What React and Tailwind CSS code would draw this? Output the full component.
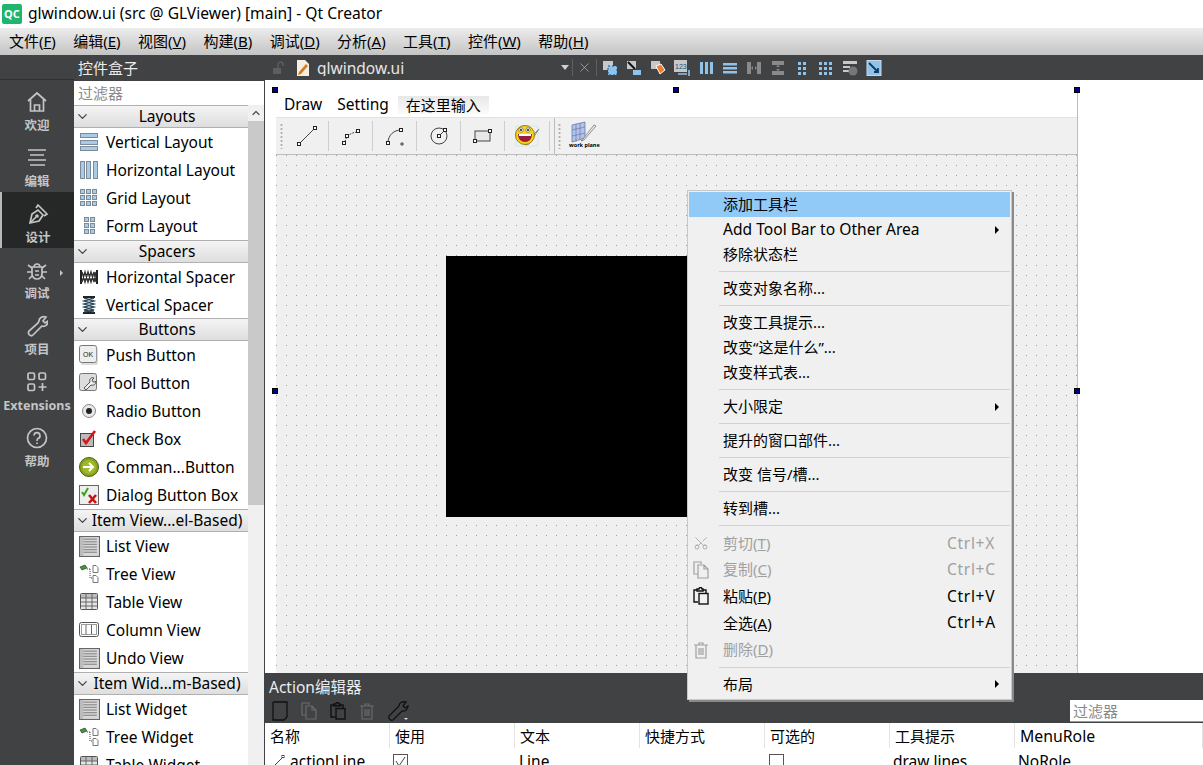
import { ChevronDown, ChevronUp, Scissors, X } from 'lucide-react'

const font = "font-['Noto_Sans','Noto_Sans_CJK_SC',sans-serif]"

/* ---------- widget box icons ---------- */
const Svg = ({ children, size = 20, className = '' }) => (
  <svg width={size} height={size} viewBox="0 0 20 20" fill="none" className={className}>
    {children}
  </svg>
)

const Cell = ({ x, y, w, h }) => (
  <rect x={x + 0.5} y={y + 0.5} width={w} height={h} fill="#a8cbe8" stroke="#7d8b99" />
)

const VLayout = () => (
  <Svg>
    <Cell x={1} y={1} w={17} h={4} />
    <Cell x={1} y={8} w={17} h={4} />
    <Cell x={1} y={14} w={17} h={4} />
  </Svg>
)
const HLayout = () => (
  <Svg>
    <Cell x={1} y={1} w={4} h={17} />
    <Cell x={7} y={1} w={4} h={17} />
    <Cell x={14} y={1} w={4} h={17} />
  </Svg>
)
const GridLayout = () => (
  <Svg>
    {[1, 7, 13].map((y) => [1, 7, 13].map((x) => <Cell key={`${x}-${y}`} x={x} y={y} w={4} h={4} />))}
  </Svg>
)
const FormLayout = () => (
  <Svg>
    {[1, 7, 13].map((y) => [5, 11].map((x) => <Cell key={`${x}-${y}`} x={x} y={y} w={4} h={4} />))}
  </Svg>
)
const HSpacer = () => (
  <Svg>
    <path d="M1 3h2v14H1zM17 3h2v14h-2z" fill="#222" />
    <path d="M3 5l3 10 3-10 3 10 3-10 2 10M3 15l3-10 3 10 3-10 3 10 2-10" stroke="#333" strokeWidth="1.4" />
  </Svg>
)
const VSpacer = () => (
  <Svg>
    <path d="M4 1h12v2H4zM4 17h12v2H4z" fill="#222" />
    <path d="M5 3l10 3-10 3 10 3-10 3 10 2M15 3L5 6l10 3-10 3 10 3-10 2" stroke="#2c4a5a" strokeWidth="1.4" />
  </Svg>
)
const PushBtn = () => (
  <Svg>
    <rect x="0.5" y="0.5" width="17" height="17" rx="2" fill="#eee" stroke="#777" />
    <path d="M2 19h16V3" stroke="#bbb" />
    <text x="9" y="12" textAnchor="middle" fontSize="7" fill="#222" fontFamily="Liberation Sans">OK</text>
  </Svg>
)
const ToolBtn = () => (
  <Svg>
    <rect x="0.5" y="0.5" width="17" height="17" rx="2" fill="#ddd" stroke="#777" />
    <path d="M5 15l6-6c-1-3 1-5 4-4l-2 2 1 2 2 0 1-1c0 3-2 5-5 4l-5 5z" fill="#eee" stroke="#555" />
  </Svg>
)
const RadioBtn = () => (
  <Svg>
    <circle cx="10" cy="10" r="6.5" fill="#e8e8e8" stroke="#888" />
    <circle cx="10" cy="10" r="3" fill="#222" />
  </Svg>
)
const CheckBtn = () => (
  <Svg>
    <rect x="1.5" y="4.5" width="13" height="13" fill="#bbb" stroke="#444" />
    <path d="M4 10l3 4 9-12" stroke="#d8141c" strokeWidth="2.6" />
  </Svg>
)
const CommandBtn = () => (
  <Svg>
    <circle cx="10" cy="10" r="9.5" fill="#8ba41e" stroke="#4d5c10" />
    <circle cx="10" cy="10" r="7" fill="#9dba2a" />
    <path d="M4 10h10M10 6l4 4-4 4" stroke="#fff" strokeWidth="2" />
  </Svg>
)
const DialogBtn = () => (
  <Svg>
    <rect x="0.5" y="0.5" width="19" height="19" fill="#eee" stroke="#666" />
    <path d="M3 7l2 3 4-7" stroke="#3ea21c" strokeWidth="2" />
    <path d="M10 10l7 8M17 10l-7 8" stroke="#c81414" strokeWidth="2.6" />
  </Svg>
)
const ListV = () => (
  <Svg size={21} className="shrink-0">
    <rect x="0.5" y="0.5" width="19" height="19" fill="#d8d8d8" stroke="#666" />
    {[3, 5.5, 8, 10.5, 13, 15.5].map((y) => (
      <path key={y} d={`M4 ${y}h13`} stroke="#909090" strokeWidth="1.2" />
    ))}
    <path d="M1 1h3v18H1z" fill="#bbb" />
  </Svg>
)
const TreeV = () => (
  <Svg>
    <path d="M1 3l5-2 2 3-5 2z" fill="#3d9c3a" stroke="#222" strokeWidth="0.6" />
    <path d="M8 5h3M11 5v9h2" stroke="#444" strokeDasharray="1 1" />
    <path d="M14 1.5h3l2 2v5h-5zM14 11.5h3l2 2v5h-5z" fill="#fff" stroke="#777" />
  </Svg>
)
const TableV = () => (
  <Svg>
    <rect x="1.5" y="1.5" width="17" height="16" rx="1" fill="#e5e5e5" stroke="#555" />
    <path d="M2 6h16V2H2z" fill="#bdbdbd" />
    <path d="M2 6h16M2 10h16M2 14h16M7 2v15M13 2v15" stroke="#666" />
  </Svg>
)
const ColumnV = () => (
  <Svg>
    <rect x="0.5" y="2.5" width="19" height="14" rx="2" fill="#fff" stroke="#555" />
    <path d="M7 5v10M12.5 5v10" stroke="#666" />
    <rect x="2.5" y="4.5" width="15" height="10" stroke="#999" />
  </Svg>
)

/* ---------- mode bar icons ---------- */
const Mode = ({ children }) => (
  <svg width="22" height="22" viewBox="0 0 22 22" fill="none" stroke="#c4c5c6" strokeWidth="1.7">
    {children}
  </svg>
)

const modes = [
  { label: '欢迎', icon: <path d="M2 10l9-8 9 8M4.5 8.5V20h13V8.5M8.5 20v-6h5v6" /> },
  { label: '编辑', icon: <path d="M2 3h18M4 8h14M2 13h18M4 18h15" /> },
  { label: '设计', active: true, icon: <><path d="M3 20l2-9 6-4 5 5-4 6z" /><path d="M9 5l2-3 9 9-3 2M4 19l5-5" /><circle cx="10" cy="13" r="1" /></> },
  { label: '调试', arrow: true, icon: <><path d="M6 8h10v7a5 5 0 0 1-10 0zM8 8a3 3 0 0 1 6 0M2 6l4 3M20 6l-4 3M1 13h5M21 13h-5M3 20l3-3M19 20l-3-3M9 12h4M9 16h4" /></> },
  { label: '项目', icon: <path d="M13 6c0-3 3-5 7-4l-3 4 2 2 3-2c0 4-3 6-6 5l-9 9c-2 2-6-1-4-4l9-8z" /> },
  { label: 'Extensions', icon: <><rect x="2" y="2" width="6.5" height="6.5" rx="1.5" /><rect x="13" y="2" width="6.5" height="6.5" rx="1.5" /><rect x="2" y="13" width="6.5" height="6.5" rx="1.5" /><path d="M16.5 12v8M12.5 16h8" /></> },
  { label: '帮助', icon: <><circle cx="11" cy="11" r="9.5" /><path d="M8 8.500a3 3 0 1 1 4 3c-1 .5-1 1-1 2.500M11 15.500v1.500" /></> },
]

/* ---------- data ---------- */
const sections = [
  { title: 'Layouts', items: [['Vertical Layout', <VLayout />], ['Horizontal Layout', <HLayout />], ['Grid Layout', <GridLayout />], ['Form Layout', <FormLayout />]] },
  { title: 'Spacers', items: [['Horizontal Spacer', <HSpacer />], ['Vertical Spacer', <VSpacer />]] },
  { title: 'Buttons', tight: true, items: [['Push Button', <PushBtn />], ['Tool Button', <ToolBtn />], ['Radio Button', <RadioBtn />], ['Check Box', <CheckBtn />], ['Comman...Button', <CommandBtn />], ['Dialog Button Box', <DialogBtn />]] },
  { title: 'Item View...el-Based)', items: [['List View', <ListV />], ['Tree View', <TreeV />], ['Table View', <TableV />], ['Column View', <ColumnV />], ['Undo View', <ListV />]] },
  { title: 'Item Wid...m-Based)', items: [['List Widget', <ListV />], ['Tree Widget', <TreeV />], ['Table Widget', <TableV />]] },
]

const menus = [
  ['文件', 'F'], ['编辑', 'E'], ['视图', 'V'], ['构建', 'B'], ['调试', 'D'],
  ['分析', 'A'], ['工具', 'T'], ['控件', 'W'], ['帮助', 'H'],
]

const columns = ['名称', '使用', '文本', '快捷方式', '可选的', '工具提示', 'MenuRole']

/* ---------- shared small icons ---------- */
const CopyIcon = ({ color }) => (
  <svg width="18" height="18" viewBox="0 0 18 18" fill="none" stroke={color} strokeWidth="1.2">
    <path d="M9 3V1H2v12h4" />
    <path d="M6 4h6l4 4v9H6zM12 4v4h4" />
  </svg>
)
const PasteIcon = ({ color }) => (
  <svg width="18" height="18" viewBox="0 0 18 18" fill="none" stroke={color} strokeWidth="1.4">
    <path d="M6 15H2V3h3M11 3h3v3" />
    <path d="M5 4V2h2a1.500 1.500 0 0 1 3 0h1v2z" />
    <rect x="7" y="6.500" width="9" height="10.500" />
  </svg>
)
const TrashIcon = ({ color }) => (
  <svg width="18" height="18" viewBox="0 0 18 18" fill="none" stroke={color} strokeWidth="1.2">
    <path d="M2 4h14M7 4V2h4v2M4 4v13h10V4M7 7v7M9 7v7M11 7v7" />
  </svg>
)

const Arrow = () => (
  <span className="w-0 h-0 border-y-[4px] border-y-transparent border-l-[4px] border-l-black" />
)

/* ---------- context menu ---------- */
const Sep = () => <div className="h-px bg-[#d2d2d2] ml-[30px] my-1" />

function MenuRow({ label, shortcut, arrow, icon, disabled, active, tall }) {
  return (
    <div
      className={`flex items-center ${tall ? 'h-[26.6px]' : 'h-[25px]'} ${active ? 'bg-[#91c9f7]' : ''} ${disabled ? 'text-[#a0a0a0]' : 'text-black'}`}
    >
      <span className="w-[24px] flex justify-center shrink-0">{icon}</span>
      <span className="ml-[10px] flex-1 whitespace-pre">{label}</span>
      {shortcut && <span className="w-[63px] text-[15.5px] tracking-[0.7px]">{shortcut}</span>}
      {arrow && <span className="mr-[11px] flex"><Arrow /></span>}
    </div>
  )
}

const Mn = ({ t, k }) => (
  <>
    {t}(<u>{k}</u>)
  </>
)

function ContextMenu() {
  return (
    <div className="absolute left-[687px] top-[190px] w-[325px] h-[510px] p-[1px] bg-[#f0f0f0] border border-[#c8c8c8] shadow-[2px_2px_0_#8a8a8a] text-[15px] leading-none">
      <MenuRow label="添加工具栏" active />
      <MenuRow label={<span className="text-[15.6px]">Add Tool Bar to Other Area</span>} arrow />
      <MenuRow label="移除状态栏" />
      <Sep />
      <MenuRow label="改变对象名称..." />
      <Sep />
      <MenuRow label="改变工具提示..." />
      <MenuRow label="改变“这是什么”..." />
      <MenuRow label="改变样式表..." />
      <Sep />
      <MenuRow label="大小限定" arrow />
      <Sep />
      <MenuRow label="提升的窗口部件..." />
      <Sep />
      <MenuRow label="改变 信号/槽..." />
      <Sep />
      <MenuRow label="转到槽..." />
      <Sep />
      <MenuRow tall disabled label={<Mn t="剪切" k="T" />} shortcut="Ctrl+X" icon={<Scissors size={16} strokeWidth={1.2} className="-rotate-90" />} />
      <MenuRow tall disabled label={<Mn t="复制" k="C" />} shortcut="Ctrl+C" icon={<CopyIcon color="#a0a0a0" />} />
      <MenuRow tall label={<Mn t="粘贴" k="P" />} shortcut="Ctrl+V" icon={<PasteIcon color="#111" />} />
      <MenuRow tall label={<Mn t="全选" k="A" />} shortcut="Ctrl+A" />
      <MenuRow tall disabled label={<Mn t="删除" k="D" />} icon={<TrashIcon color="#a0a0a0" />} />
      <Sep />
      <MenuRow label="布局" arrow />
    </div>
  )
}

/* ---------- designer toolbar on the dark tab bar ---------- */
const Bar = ({ children }) => (
  <svg width="16" height="16" viewBox="0 0 16 16" fill="none" className="shrink-0">
    {children}
  </svg>
)
const blue = '#8fc3ea'
const grey = '#c8c8c8'
const designerTools = [
  <><rect x="1" y="1" width="10" height="9" fill={grey} /><rect x="6" y="6" width="9" height="9" fill={blue} stroke="#1d4f80" strokeDasharray="2 2" /></>,
  <><rect x="1" y="1" width="9" height="8" fill={grey} /><path d="M2 2l7 7" stroke="#111" strokeWidth="2" /><rect x="7" y="10" width="8" height="5" fill={blue} /></>,
  <><rect x="1" y="1" width="9" height="8" fill={grey} /><path d="M6 6l5-2 4 6-5 4z" fill="#f08030" stroke="#fff" /></>,
  <><rect x="0" y="0" width="13" height="12" fill={grey} /><text x="1" y="9" fontSize="7" fill="#1d4f80" fontFamily="Liberation Sans">123</text><path d="M4 14h9M15 10v6" stroke={blue} strokeWidth="1.600" /></>,
  <path d="M2 2h3v12H2zM7 2h3v12H7zM12 2h3v12h-3z" fill={blue} />,
  <path d="M1 3h14v2.500H1zM1 7h14v2.500H1zM1 11h14v2.500H1z" fill={blue} />,
  <path d="M1 2h4v12H1zM11 2h4v12h-4zM5 8l2-2v4zM11 8L9 6v4z" fill="#8a8a8a" />,
  <path d="M2 1h12v4H2zM2 11h12v4H2zM8 5l-2 2h4zM8 11l-2-2h4z" fill="#8a8a8a" />,
  <path d="M4 2h3v3H4zM9 2h3v3H9zM4 7h3v3H4zM9 7h3v3H9zM4 12h3v3H4zM9 12h3v3H9z" fill={blue} />,
  <path d="M1 2h3v3H1zM6 2h3v3H6zM11 2h3v3h-3zM1 7h3v3H1zM6 7h3v3H6zM11 7h3v3h-3zM1 12h3v3H1zM6 12h3v3H6zM11 12h3v3h-3z" fill={blue} />,
  <><path d="M1 1h14v3H1zM1 6h7v2H1zM1 10h7v2H1z" fill={grey} /><circle cx="11" cy="11" r="4.500" fill="#777" /></>,
  <><rect x="1" y="0.500" width="14" height="15" fill={blue} stroke="#c8d8e8" /><path d="M3 3l9 9M12 8v4H8" stroke="#0d3c66" strokeWidth="1.800" /></>,
]

function TabBar() {
  return (
    <div className="h-[25px] bg-[#404244] flex items-center shrink-0">
      <svg width="14" height="14" viewBox="0 0 14 14" className="ml-[7px] shrink-0">
        <path d="M1 7h8v6H1z" fill="#5c5e60" />
        <path d="M6 7V3.500a2.500 2.500 0 0 1 5 0V5" stroke="#5c5e60" strokeWidth="1.500" fill="none" />
      </svg>
      <svg width="14" height="16" viewBox="0 0 14 16" className="ml-[10px] shrink-0">
        <path d="M1 0h8l4 4v12H1z" fill="#f4efe2" />
        <path d="M3 12L10 4l2 2-7 8-3 1z" fill="#d87a1e" />
      </svg>
      <span className="ml-[7px] h-[16px] overflow-hidden text-[15.5px] leading-[17px] text-[#e6e6e6] w-[244px]">glwindow.ui</span>
      <span className="w-0 h-0 border-x-[4.500px] border-x-transparent border-t-[5px] border-t-[#d0d0d0]" />
      <span className="ml-[3px] w-px h-[17px] bg-[#5c5e60]" />
      <X size={15} strokeWidth={1} className="ml-[4px] text-[#c4c4c4]" />
      <span className="ml-[4px] w-px h-[17px] bg-[#5c5e60]" />
      <div className="ml-[5px] flex gap-[8px] items-center">
        {designerTools.map((t, i) => (
          <Bar key={i}>{t}</Bar>
        ))}
      </div>
    </div>
  )
}

/* ---------- the form being edited ---------- */
const Handle = ({ className }) => (
  <span className={`absolute w-[6px] h-[6px] bg-[#000080] border border-black ${className}`} />
)

const Tool = ({ children }) => (
  <svg width="22" height="22" viewBox="0 0 22 22" fill="none" stroke="#444" strokeWidth="1">
    {children}
  </svg>
)
const Pt = ({ x, y }) => <rect x={x - 1.5} y={y - 1.5} width="3" height="3" fill="#fff" stroke="#222" />

const Grip = () => (
  <span className="block w-[3px] h-[26px] shrink-0 bg-[radial-gradient(circle,#b0b0b0_1px,transparent_1.200px)] bg-[length:3px_4px]" />
)

const formTools = [
  <><path d="M4 18L18 4" /><Pt x={3} y={19} /><Pt x={19} y={3} /></>,
  <><path d="M5 17c1-6 5-9 12-10" strokeDasharray="2 1" /><Pt x={4} y={18} /><Pt x={7} y={11} /><Pt x={18} y={6} /></>,
  <><path d="M4 18c0-8 6-13 13-13" /><Pt x={4} y={18} /><Pt x={17} y={5} /><path d="M16 19h4M18 17v4" /></>,
  <><circle cx="11" cy="11" r="8" /><path d="M11 11l6-6" /><Pt x={11} y={11} /><Pt x={17} y={5} /></>,
  <><rect x="3" y="6" width="15" height="10" fill="#e8e8e8" /><Pt x={3} y={16} /><Pt x={18} y={6} /></>,
]

function FormToolbar() {
  return (
    <div className="h-[38px] bg-[#f0f0f0] border-y border-t-[#e2e2e2] border-b-[#bdbdbd] flex items-center shrink-0">
      <span className="ml-[4px]"><Grip /></span>
      <div className="ml-[2px] flex">
        {formTools.map((t, i) => (
          <div key={i} className="w-[44px] h-[30px] border-r border-[#cfcfcf] flex items-center justify-center">
            <Tool>{t}</Tool>
          </div>
        ))}
        <div className="w-[45px] h-[30px] border-r border-[#cfcfcf] flex items-center justify-center">
          <svg width="28" height="26" viewBox="0 0 28 26" fill="none">
            <rect x="3" y="3" width="22" height="20" stroke="#a8e4e4" strokeWidth="0.500" />
            <path d="M21 11l5-5-10 15-3 1 1-3" stroke="#888" />
            <circle cx="12" cy="12" r="9.500" fill="#f6d518" stroke="#9a7a10" />
            <path d="M5 11h14c0 5-3 8-7 8s-7-3-7-8z" fill="#9c1c3c" />
            <path d="M6 11h12v2H6z" fill="#fff" />
            <circle cx="8" cy="7" r="2.200" fill="#fff" stroke="#333" strokeWidth="0.500" />
            <circle cx="15" cy="7" r="2.200" fill="#fff" stroke="#333" strokeWidth="0.500" />
            <circle cx="8" cy="7" r="0.900" fill="#000" />
            <circle cx="15" cy="7" r="0.900" fill="#000" />
          </svg>
        </div>
      </div>
      <span className="ml-[4px] w-px h-[36px] bg-[#bdbdbd]" />
      <span className="ml-[3px]"><Grip /></span>
      <div className="relative ml-[8px] w-[28px] h-[30px]">
        <svg width="28" height="24" viewBox="0 0 28 24" fill="none">
          <path d="M3 4l13-3v16L3 21z" fill="#a8c8ea" stroke="#7a60a0" strokeWidth="0.700" />
          <path d="M7 3v18M11 2v17M3 9l13-3M3 15l13-3" stroke="#7a60a0" strokeWidth="0.600" />
          <path d="M14 18l11-14 2 1-12 14-3 1z" fill="#eee" stroke="#666" strokeWidth="0.700" />
        </svg>
        <span className="absolute left-0 top-[22px] text-[5.500px] leading-none font-bold whitespace-nowrap text-black">work plane</span>
      </div>
    </div>
  )
}

function FormArea() {
  return (
    <div className="relative flex-1 min-h-0 bg-white pl-[11px] pr-[125px] pt-[12px]">
      <Handle className="left-[7px] top-[7px]" />
      <Handle className="left-[408px] top-[7px]" />
      <Handle className="left-[809px] top-[7px]" />
      <Handle className="left-[7px] top-[308px]" />
      <Handle className="left-[809px] top-[308px]" />
      <div className="h-full flex flex-col border-r border-[#bdbdbd]">
        <div className="h-[25px] flex items-center shrink-0 text-[15.5px] pl-[8px] gap-[15px] text-black">
          <span>Draw</span>
          <span>Setting</span>
          <span className="ml-[-6px] h-[18px] leading-[18px] px-[8px] bg-gradient-to-b from-[#e8e8e8] to-[#fafafa] text-[15px]">在这里输入</span>
        </div>
        <FormToolbar />
        <div className="flex-1 min-h-0 bg-[#f0f0f0] bg-[radial-gradient(circle_at_0.500px_0.500px,#9c9c9c_0.700px,transparent_0.900px)] bg-[length:10px_10px] pl-[170px] pt-[101px]">
          <div className="w-[261px] h-[261px] bg-black" />
        </div>
      </div>
    </div>
  )
}

/* ---------- bottom action editor ---------- */
function ActionEditor() {
  return (
    <div className="h-[50px] bg-[#404244] shrink-0 relative">
      <div className="pl-[4px] pt-[3px] h-[27px] text-[15.5px] leading-[22px] text-[#ececec]">Action编辑器</div>
      <div className="flex items-center pl-[6px] gap-[11px] h-[22px]">
        <svg width="18" height="20" viewBox="0 0 18 20" fill="none" stroke="#111" strokeWidth="1.300">
          <path d="M2 2c0-1 1-1 1-1h13v15l-3 3H2z" />
        </svg>
        <CopyIcon color="#6a6a6a" />
        <PasteIcon color="#111" />
        <TrashIcon color="#6a6a6a" />
        <svg width="22" height="22" viewBox="0 0 22 22" fill="none" stroke="#111" strokeWidth="1.300">
          <path d="M12 6c0-3 3-5 7-4l-3 4 2 2 3-2c0 3-3 6-6 5l-9 9c-2 1-5-1-4-4l10-10z" />
          <path d="M17 18h4l-2 2z" fill="#ddd" stroke="none" />
        </svg>
      </div>
      <div className="absolute right-0 bottom-[1px] w-[133px] h-[22px] bg-white border-b border-[#999] pl-[3px] text-[15px] leading-[22px] text-[#8a8a8a]">过滤器</div>
    </div>
  )
}

const Check = ({ checked }) => (
  <span className="block w-[15px] h-[15px] border border-[#555] bg-white">
    {checked && (
      <svg width="13" height="13" viewBox="0 0 13 13" fill="none" stroke="#444">
        <path d="M2 6l3 5 6-9" />
      </svg>
    )}
  </span>
)

function ActionTable() {
  return (
    <div className="h-[42px] shrink-0 bg-white overflow-hidden text-[15.5px]">
      <div className="h-[28px] grid grid-cols-[125px_125px_125px_125px_125px_125px_1fr]">
        {columns.map((c) => (
          <div key={c} className="flex items-center h-[27px] pl-[5px] text-[15px] last:text-[15.8px]">
            <span className="flex-1">{c}</span>
            <span className="w-px h-[25px] self-start bg-[#e4e4e4]" />
          </div>
        ))}
      </div>
      <div className="h-[28px] grid grid-cols-[125px_125px_125px_125px_125px_125px_1fr] items-start">
        <div className="flex items-center pl-[7px] gap-[5px] leading-[20px]">
          <svg width="13" height="13" viewBox="0 0 13 13" fill="none" stroke="#444">
            <path d="M1 12L11 2" />
            <rect x="10" y="0.500" width="2" height="2" />
          </svg>
          actionLine
        </div>
        <div className="pl-[3px] pt-[3px]"><Check checked /></div>
        <div className="pl-[4px] leading-[20px]">Line</div>
        <div />
        <div className="pl-[4px] pt-[3px]"><Check /></div>
        <div className="pl-[3px] leading-[20px]">draw lines</div>
        <div className="pl-[3px] leading-[20px]">NoRole</div>
      </div>
    </div>
  )
}

/* ---------- left side ---------- */
function ModeBar() {
  return (
    <div className="w-[74px] bg-[#404244] shrink-0 flex flex-col">
      <div className="h-[25px] border-b border-[#2e2f30] shrink-0" />
      {modes.map((m) => (
        <div
          key={m.label}
          className={`relative h-[56px] pt-[11px] flex flex-col items-center gap-[4px] ${m.active ? 'bg-[#262828] border-l-2 border-[#b8b8b8]' : ''}`}
        >
          <Mode>{m.icon}</Mode>
          <span className="text-[12.500px] leading-[18px] font-bold text-[#c4c5c6] whitespace-nowrap">{m.label}</span>
          {m.arrow && (
            <span className="absolute left-[60px] top-[22px] w-0 h-0 border-y-[3px] border-y-transparent border-l-[3px] border-l-[#c4c5c6]" />
          )}
        </div>
      ))}
    </div>
  )
}

function WidgetSection({ title, items, tight }) {
  return (
    <>
      <div className={`h-[23px] flex items-center bg-gradient-to-b from-[#f4f4f4] to-[#dedede] border-y border-y-[#b0b0b0] shrink-0 ${tight ? '-mt-[1px]' : ''}`}>
        <ChevronDown size={15} strokeWidth={2} className="ml-[1px] text-[#444] shrink-0" />
        <span className="flex-1 text-center whitespace-nowrap text-[15.5px] pr-[4px]">{title}</span>
      </div>
      {items.map(([label, icon]) => (
        <div key={label} className="h-[28px] flex items-center shrink-0">
          <span className="w-[32px] pl-[5px] shrink-0 flex">{icon}</span>
          <span className="pt-[1px] text-[15.5px] whitespace-nowrap">{label}</span>
        </div>
      ))}
    </>
  )
}

function WidgetBox() {
  return (
    <div className="w-[191px] shrink-0 flex flex-col bg-white border-r border-[#404244] overflow-hidden">
      <div className="h-[26px] bg-[#404244] text-[#ececec] text-[15px] leading-[26px] pl-[4px] shrink-0">控件盒子</div>
      <div className="h-[24px] text-[15px] leading-[24px] pl-[4px] text-[#8a8a8a] shrink-0">过滤器</div>
      <div className="flex flex-1 min-h-0">
        <div className="w-[174px] flex flex-col shrink-0 text-black">
          {sections.map((s) => (
            <WidgetSection key={s.title} title={s.title} items={s.items} tight={s.tight} />
          ))}
        </div>
        <div className="flex-1 bg-[#f0f0f0] flex flex-col">
          <div className="h-[16px] flex items-center justify-center">
            <ChevronUp size={12} strokeWidth={2.500} className="text-[#555]" />
          </div>
          <div className="h-[384px] bg-[#c9c9c9]" />
        </div>
      </div>
    </div>
  )
}

export default function App() {
  return (
    <div className={`relative w-[1203px] h-[765px] overflow-hidden flex flex-col bg-white ${font}`}>
      {/* Window title */}
      <div className="h-[28px] flex items-center shrink-0 bg-white">
        <span className="ml-[2px] w-[20px] h-[20px] rounded-[2px] bg-[#1fb56f] text-white text-[11px] font-bold leading-[20px] text-center">QC</span>
        <span className="ml-[6px] text-[15.6px] text-black">glwindow.ui (src @ GLViewer) [main] - Qt Creator</span>
      </div>
      {/* Menu bar */}
      <div className="h-[27px] flex items-center shrink-0 gap-[17.4px] pl-[9px] bg-gradient-to-b from-[#ececec] to-[#c4c4c4] text-[15px] text-black">
        {menus.map(([t, k]) => (
          <span key={k}>
            <Mn t={t} k={k} />
          </span>
        ))}
      </div>
      {/* Body */}
      <div className="flex-1 min-h-0 flex">
        <ModeBar />
        <WidgetBox />
        <div className="flex-1 min-w-0 flex flex-col">
          <TabBar />
          <FormArea />
          <ActionEditor />
          <ActionTable />
        </div>
      </div>
      <ContextMenu />
    </div>
  )
}
